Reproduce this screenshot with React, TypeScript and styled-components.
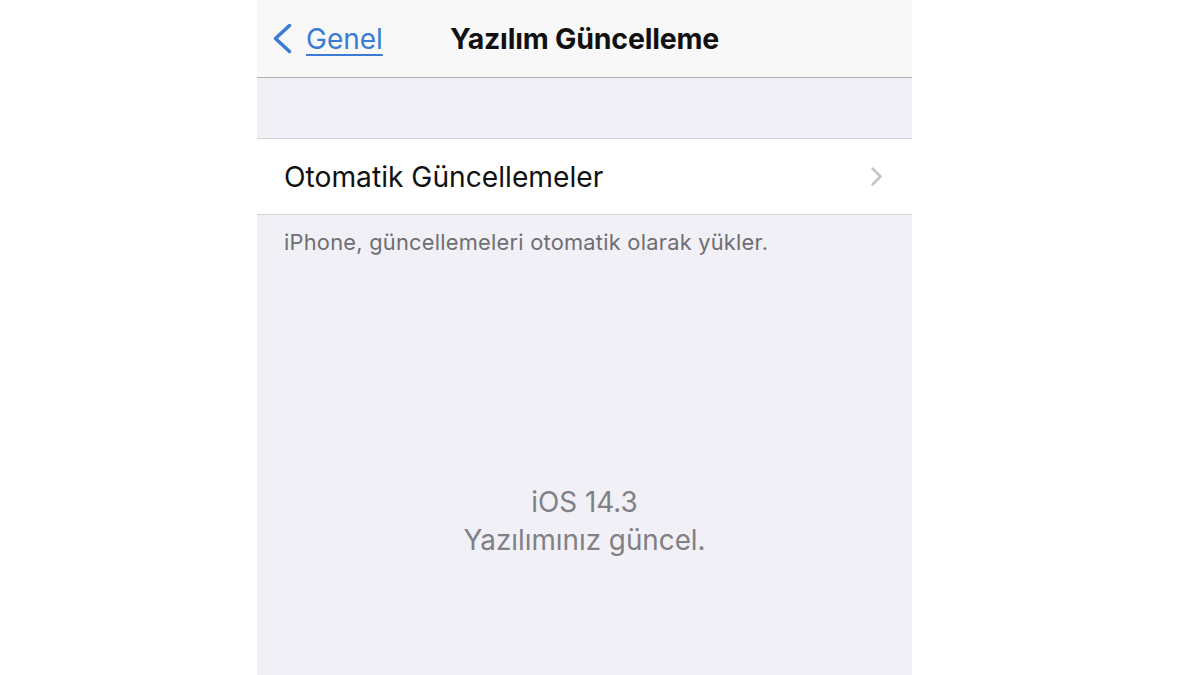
import styled, { createGlobalStyle } from "styled-components";

const GlobalStyle = createGlobalStyle`
  html, body {
    margin: 0;
    padding: 0;
    background: #ffffff;
    font-family: Inter, "Noto Sans", sans-serif;
  }
`;

const Page = styled.div`
  width: 1200px;
  height: 675px;
  display: flex;
  padding-left: 257px;
  box-sizing: border-box;
  overflow: hidden;
`;

const Screen = styled.div`
  width: 655px;
  height: 675px;
  background: #f1f0f6;
  display: flex;
  flex-direction: column;
`;

const NavBar = styled.div`
  height: 77px;
  background: #f8f8f8;
  border-bottom: 1px solid #b2b2b4;
  display: flex;
  align-items: center;
  position: relative;
`;

const BackButton = styled.a`
  display: flex;
  align-items: center;
  gap: 13px;
  padding-left: 15px;
  color: #3a7bd5;
  font-size: 28px;
  text-decoration: underline;
  text-underline-offset: 5px;
  text-decoration-thickness: 2px;
  position: relative;
  z-index: 1;
`;

const Title = styled.div`
  position: absolute;
  left: 0;
  right: 0;
  text-align: center;
  font-size: 28.5px;
  font-weight: 700;
  color: #111;
  letter-spacing: -0.2px;
`;

const Spacer = styled.div`
  height: 60px;
`;

const Group = styled.div`
  background: #ffffff;
  border-top: 1px solid #d4d4d8;
  border-bottom: 1px solid #d4d4d8;
`;

const Row = styled.div`
  height: 75px;
  display: flex;
  align-items: center;
  justify-content: space-between;
  padding: 0 29px 0 27px;
  font-size: 28.2px;
  color: #111;
`;

const Footer = styled.div`
  padding: 14px 27px 0;
  font-size: 21.8px;
  letter-spacing: 0.25px;
  color: #6e6e73;
`;

const Status = styled.div`
  margin-top: 228px;
  text-align: center;
  font-size: 27.8px;
  line-height: 38px;
  color: #808085;
`;

type ChevronProps = { color: string; w: number; h: number; stroke: number; flip?: boolean };

function Chevron({ color, w, h, stroke, flip }: ChevronProps) {
  return (
    <svg width={w} height={h} viewBox={`0 0 ${w} ${h}`} fill="none">
      <path
        d={`M${w - stroke} ${stroke} L${stroke} ${h / 2} L${w - stroke} ${h - stroke}`}
        stroke={color}
        strokeWidth={stroke}
        strokeLinecap="round"
        strokeLinejoin="round"
        transform={flip ? `rotate(180 ${w / 2} ${h / 2})` : undefined}
      />
    </svg>
  );
}

export default function App() {
  return (
    <>
      <GlobalStyle />
      <Page>
        <Screen>
          <NavBar>
            <BackButton>
              <Chevron color="#3a7bd5" w={21} h={33} stroke={3.5} />
              Genel
            </BackButton>
            <Title>Yazılım Güncelleme</Title>
          </NavBar>
          <Spacer />
          <Group>
            <Row>
              Otomatik Güncellemeler
              <Chevron color="#c4c4c9" w={13} h={21} stroke={2.5} flip />
            </Row>
          </Group>
          <Footer>iPhone, güncellemeleri otomatik olarak yükler.</Footer>
          <Status>
            iOS 14.3
            <br />
            Yazılımınız güncel.
          </Status>
        </Screen>
      </Page>
    </>
  );
}
